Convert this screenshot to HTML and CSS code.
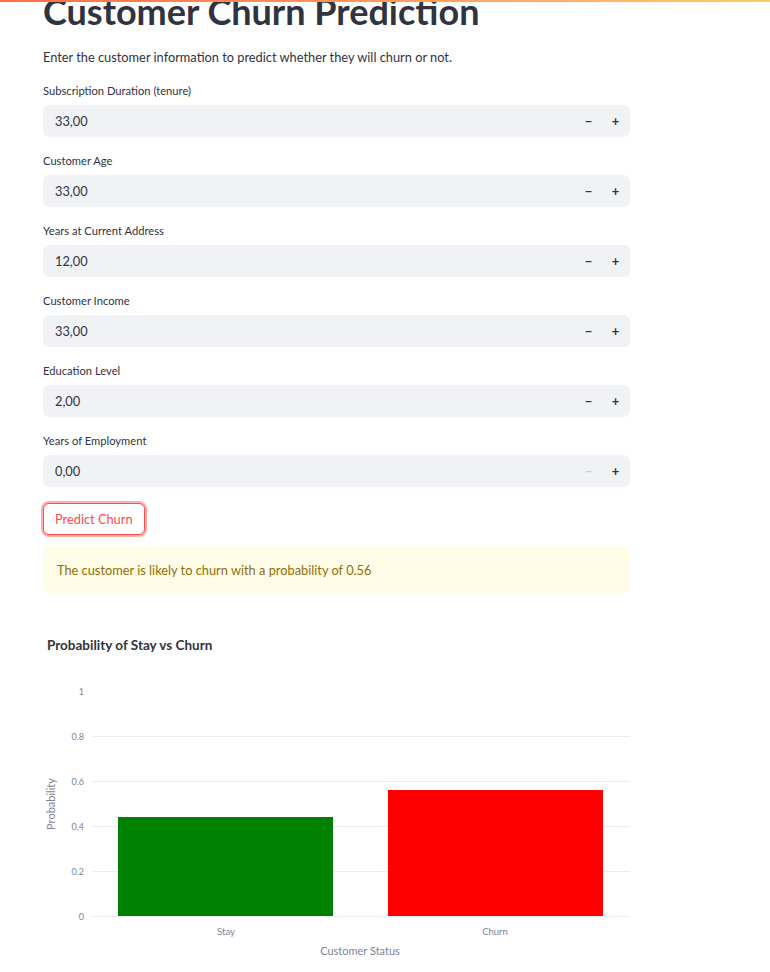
FILE: index.html
```html
<!DOCTYPE html>
<html lang="en">
<head>
<meta charset="utf-8">
<title>Customer Churn Prediction</title>
<link rel="stylesheet" href="styles.css">
</head>
<body>
<div class="decoration"></div>
<main class="block">
  <h1 class="title">Customer Churn Prediction</h1>
  <p class="intro">Enter the customer information to predict whether they will churn or not.</p>

  <div class="field">
    <label class="label">Subscription Duration (tenure)</label>
    <div class="num">
      <span class="value">33,00</span>
      <span class="step">&minus;</span>
      <span class="step">+</span>
    </div>
  </div>
  <div class="field">
    <label class="label">Customer Age</label>
    <div class="num">
      <span class="value">33,00</span>
      <span class="step">&minus;</span>
      <span class="step">+</span>
    </div>
  </div>
  <div class="field">
    <label class="label">Years at Current Address</label>
    <div class="num">
      <span class="value">12,00</span>
      <span class="step">&minus;</span>
      <span class="step">+</span>
    </div>
  </div>
  <div class="field">
    <label class="label">Customer Income</label>
    <div class="num">
      <span class="value">33,00</span>
      <span class="step">&minus;</span>
      <span class="step">+</span>
    </div>
  </div>
  <div class="field">
    <label class="label">Education Level</label>
    <div class="num">
      <span class="value">2,00</span>
      <span class="step">&minus;</span>
      <span class="step">+</span>
    </div>
  </div>
  <div class="field">
    <label class="label">Years of Employment</label>
    <div class="num">
      <span class="value">0,00</span>
      <span class="step step-disabled">&minus;</span>
      <span class="step">+</span>
    </div>
  </div>

  <div class="btn-row"><button class="btn">Predict Churn</button></div>

  <div class="alert">The customer is likely to churn with a probability of 0.56</div>

  <svg class="chart" width="587" height="367" viewBox="0 0 587 367">
    <text class="c-title" x="4" y="44.5">Probability of Stay vs Churn</text>
    <g class="grid">
      <line x1="48.5" x2="587" y1="131.5" y2="131.5"/>
      <line x1="48.5" x2="587" y1="176.5" y2="176.5"/>
      <line x1="48.5" x2="587" y1="221.5" y2="221.5"/>
      <line x1="48.5" x2="587" y1="266.5" y2="266.5"/>
    </g>
    <rect x="75" y="212" width="215" height="99" fill="#008000"/>
    <rect x="345" y="185" width="215" height="126" fill="#ff0000"/>
    <line class="zero" x1="48.5" x2="587" y1="311.5" y2="311.5"/>
    <g class="ytick">
      <text x="41" y="89.5">1</text>
      <text x="41" y="134.5">0.8</text>
      <text x="41" y="179.5">0.6</text>
      <text x="41" y="224.5">0.4</text>
      <text x="41" y="269.5">0.2</text>
      <text x="41" y="314.5">0</text>
    </g>
    <g class="xtick">
      <text x="183" y="329.5">Stay</text>
      <text x="452" y="329.5">Churn</text>
    </g>
    <text class="axis-title" x="317" y="350">Customer Status</text>
    <text class="axis-title" transform="translate(12 199) rotate(-90)">Probability</text>
  </svg>
</main>
</body>
</html>
```
FILE: styles.css
```css
* { box-sizing: border-box; }
html, body { margin: 0; padding: 0; background: #ffffff; }
body {
  font-family: "Lato", "Liberation Sans", sans-serif;
  color: rgb(49, 51, 63);
  overflow: hidden;
}
.decoration {
  position: absolute;
  top: 0; left: 0; right: 0;
  height: 2px;
  background: linear-gradient(90deg, rgb(255, 110, 70), rgb(255, 200, 110));
}
.block {
  width: 587px;
  margin-left: 43px;
  display: flex;
  flex-direction: column;
}
.title {
  margin: -10px 0 0 0;
  font-size: 36px;
  font-weight: 700;
  line-height: 42px;
  letter-spacing: 0;
  white-space: nowrap;
}
.intro {
  margin: 15px 0 0 0;
  font-size: 12.8px;
  line-height: 20px;
}
.field { margin-top: 17px; display: flex; flex-direction: column; }
.label {
  font-size: 11.2px;
  line-height: 14px;
  height: 14px;
}
.num {
  margin-top: 7px;
  height: 32px;
  background: rgb(240, 242, 246);
  border-radius: 6px;
  display: flex;
  align-items: center;
  padding-left: 12px;
}
.value { flex: 1; font-size: 12.8px; }
.step {
  width: 27px;
  text-align: center;
  font-size: 13px;
  font-weight: 700;
  color: rgb(49, 51, 63);
}
.step:last-child { margin-right: 1px; }
.step-disabled { color: rgb(205, 208, 215); }
.btn-row { margin-top: 16px; }
.btn {
  font-family: inherit;
  font-size: 12.8px;
  height: 32px;
  padding: 0 11px;
  border: 1px solid rgb(255, 75, 75);
  border-radius: 6px;
  background: #ffffff;
  color: rgb(255, 75, 75);
  box-shadow: 0 0 0 2px rgba(255, 75, 75, 0.45);
}
.alert {
  margin-top: 11px;
  height: 47px;
  background: rgb(255, 252, 231);
  color: rgb(146, 108, 5);
  border-radius: 6px;
  padding: 0 14px;
  display: flex;
  align-items: center;
  font-size: 12.8px;
}
.chart { display: block; margin-top: 12px; }
.c-title { font-size: 13.5px; font-weight: 700; fill: rgb(49, 51, 63); }
.grid line { stroke: rgb(233, 236, 242); stroke-width: 1; }
.zero { stroke: rgb(233, 236, 242); stroke-width: 1; }
.ytick text { font-size: 9px; fill: rgb(128, 132, 149); text-anchor: end; }
.xtick text { font-size: 9.5px; fill: rgb(128, 132, 149); text-anchor: middle; }
.axis-title { font-size: 11px; fill: rgb(128, 132, 149); text-anchor: middle; }
```
